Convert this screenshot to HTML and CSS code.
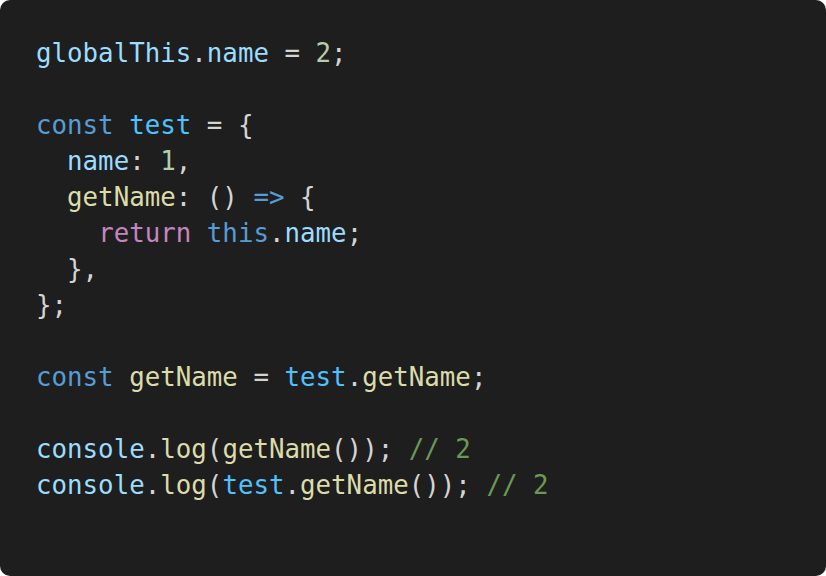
FILE: index.html
```html
<!DOCTYPE html>
<html>
<head>
<meta charset="utf-8">
<link rel="stylesheet" href="styles.css">
</head>
<body>
<pre class="code"><code><span class="v">globalThis</span><span class="p">.</span><span class="v">name</span><span class="p"> = </span><span class="n">2</span><span class="p">;</span>

<span class="k">const</span> <span class="c">test</span><span class="p"> = {</span>
  <span class="v">name</span><span class="p">: </span><span class="n">1</span><span class="p">,</span>
  <span class="f">getName</span><span class="p">: () </span><span class="k">=&gt;</span><span class="p"> {</span>
    <span class="r">return</span> <span class="k">this</span><span class="p">.</span><span class="v">name</span><span class="p">;</span>
<span class="p">  },</span>
<span class="p">};</span>

<span class="k">const</span> <span class="f">getName</span><span class="p"> = </span><span class="c">test</span><span class="p">.</span><span class="f">getName</span><span class="p">;</span>

<span class="v">console</span><span class="p">.</span><span class="f">log</span><span class="p">(</span><span class="f">getName</span><span class="p">()); </span><span class="m">// 2</span>
<span class="v">console</span><span class="p">.</span><span class="f">log</span><span class="p">(</span><span class="c">test</span><span class="p">.</span><span class="f">getName</span><span class="p">()); </span><span class="m">// 2</span></code></pre>
</body>
</html>
```
FILE: styles.css
```css
html, body {
  margin: 0;
  padding: 0;
  background: #ffffff;
}
.code {
  margin: 0;
  box-sizing: border-box;
  width: 826px;
  height: 576px;
  background: #1e1e1e;
  border-radius: 10px;
  padding: 35px 36px;
  font-family: "DejaVu Sans Mono", "Liberation Mono", monospace;
  font-size: 25.8px;
  line-height: 36px;
  color: #d4d4d4;
  white-space: pre;
  overflow: hidden;
}
.v { color: #9cdcfe; }
.k { color: #569cd6; }
.c { color: #4fc1ff; }
.f { color: #dcdcaa; }
.n { color: #b5cea8; }
.r { color: #c586c0; }
.m { color: #6a9955; }
.p { color: #d4d4d4; }
```
